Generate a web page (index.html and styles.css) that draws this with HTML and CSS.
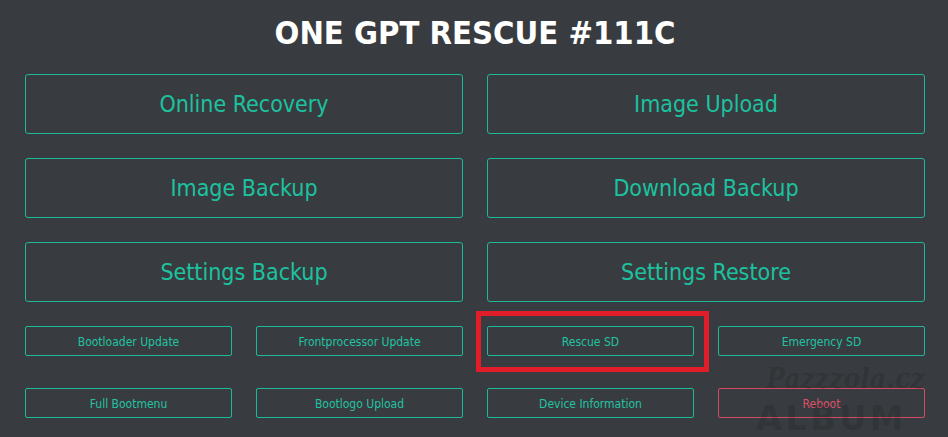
FILE: index.html
```html
<!DOCTYPE html>
<html lang="en">
<head>
<meta charset="utf-8">
<title>ONE GPT RESCUE #111C</title>
<link rel="stylesheet" href="styles.css">
</head>
<body>
<div class="page">
  <h1 class="title">ONE GPT RESCUE #111C</h1>
  <div class="grid-large">
    <button class="btn btn-large">Online Recovery</button>
    <button class="btn btn-large">Image Upload</button>
    <button class="btn btn-large">Image Backup</button>
    <button class="btn btn-large">Download Backup</button>
    <button class="btn btn-large">Settings Backup</button>
    <button class="btn btn-large">Settings Restore</button>
  </div>
  <div class="grid-small">
    <button class="btn btn-small">Bootloader Update</button>
    <button class="btn btn-small">Frontprocessor Update</button>
    <button class="btn btn-small">Rescue SD</button>
    <button class="btn btn-small">Emergency SD</button>
    <button class="btn btn-small">Full Bootmenu</button>
    <button class="btn btn-small">Bootlogo Upload</button>
    <button class="btn btn-small">Device Information</button>
    <button class="btn btn-small btn-danger">Reboot</button>
  </div>
  <div class="highlight"></div>
  <div class="watermark">
    <span class="wm-script">Pazzzola.cz</span>
    <span class="wm-album">ALBUM</span>
  </div>
</div>
</body>
</html>
```
FILE: styles.css
```css
* { box-sizing: border-box; }
html, body {
  margin: 0;
  padding: 0;
  background: #383c40;
  height: 100%;
  overflow: hidden;
}
.page {
  position: relative;
  padding: 0 23px 0 25px;
  font-family: "DejaVu Sans", "Liberation Sans", sans-serif;
  font-stretch: condensed;
}
.title {
  margin: 0;
  padding-top: 14px;
  height: 74px;
  text-align: center;
  color: #ffffff;
  font-size: 32.5px;
  line-height: 38px;
  font-weight: bold;
}
.grid-large {
  display: grid;
  grid-template-columns: 1fr 1fr;
  grid-auto-rows: 60px;
  gap: 24px 24px;
}
.grid-small {
  margin-top: 24px;
  display: grid;
  grid-template-columns: repeat(4, 1fr);
  grid-auto-rows: 30px;
  gap: 32px 24px;
}
.btn {
  background: transparent;
  border: 1px solid #1db99a;
  border-radius: 3px;
  color: #1cc29f;
  font-family: inherit;
  font-stretch: condensed;
  padding: 0;
  margin: 0;
  cursor: pointer;
}
.btn-large {
  font-size: 23px;
}
.btn-small {
  font-size: 12px;
  border-radius: 2px;
  color: #22c3a2;
  padding-top: 1px;
}
.btn-danger {
  border-color: #d44a62;
  color: #dc5169;
}
.highlight {
  position: absolute;
  left: 476px;
  top: 311px;
  width: 233px;
  height: 61px;
  border: 5px solid #e11d2a;
}
.watermark {
  position: absolute;
  left: 752px;
  top: 360px;
  width: 190px;
  height: 77px;
  pointer-events: none;
  color: rgba(15, 17, 19, 0.16);
  overflow: hidden;
}
.wm-script {
  position: absolute;
  left: 14px;
  top: 2px;
  font-family: "DejaVu Serif", serif;
  font-style: italic;
  font-weight: bold;
  font-size: 28px;
}
.wm-album {
  position: absolute;
  left: 4px;
  top: 40px;
  font-family: "DejaVu Sans", sans-serif;
  font-weight: bold;
  font-size: 34px;
  line-height: 36px;
  letter-spacing: 3px;
  font-stretch: normal;
}
```
